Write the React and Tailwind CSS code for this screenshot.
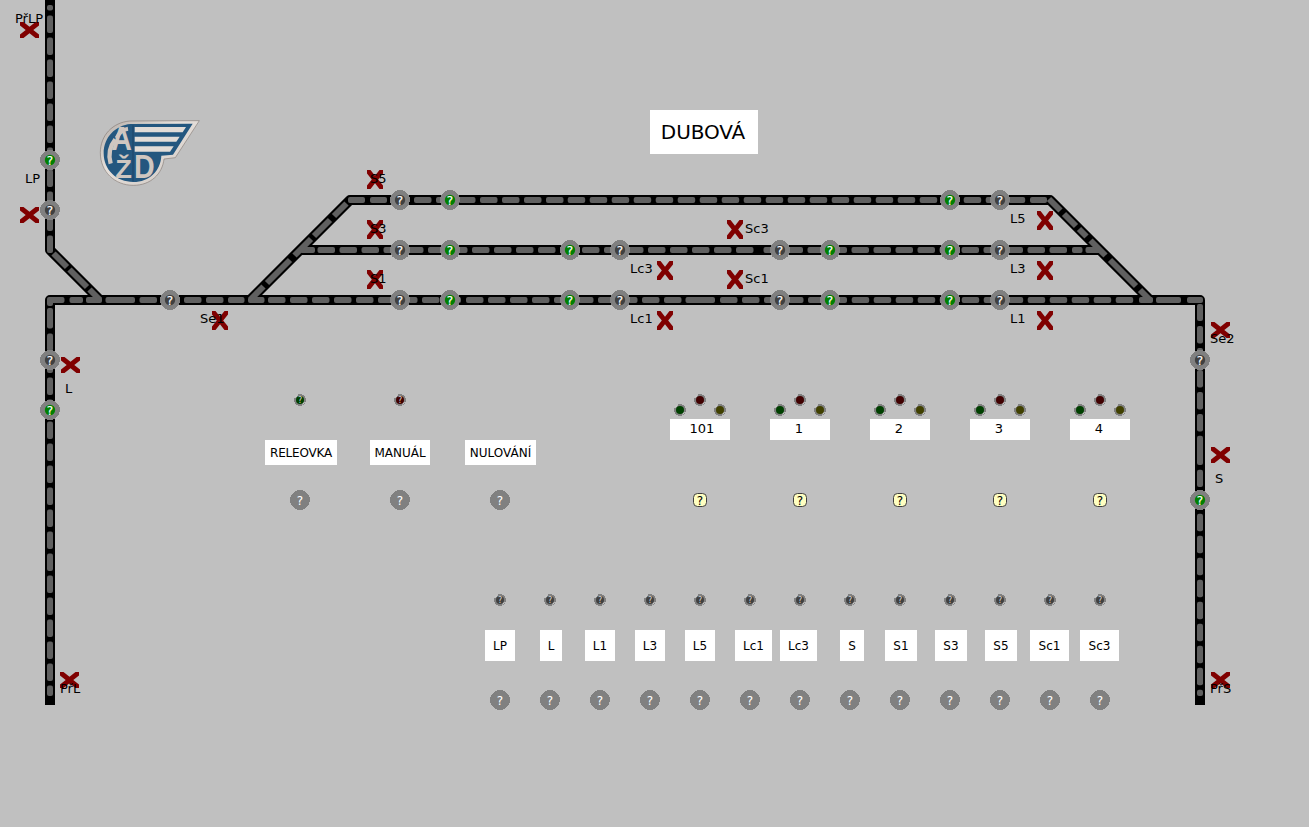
import React from "react";

const range = (from, to, step = 22, len = 17.5) => {
  const out = [];
  for (let s = from; s <= to; s += step) out.push([s, s + len]);
  return out;
};

// Occupancy dashes, given as [start, end] along each track
const HORIZONTAL = [
  { y: 200, dashes: [[348, 365], [370, 387], [392, 409], ...range(414, 458), ...range(480, 546), ...range(567.7, 1008), [1030, 1047]] },
  { y: 250, dashes: [[300, 315], ...range(317.5, 384), ...range(406, 428), ...range(450, 736), [763.5, 780], ...range(785.5, 1051), [1072, 1082.5], [1085.5, 1101]] },
  { y: 300, dashes: [[47, 64.5], [69.5, 83], [86, 102], [105.5, 135], [139.5, 157], [162, 179], ...range(184, 207), [228, 244.5], [248, 264.5], ...range(268, 400), ...range(422, 423), [444, 461], ...range(466, 555), ...range(576, 664), [685.5, 715], ...range(720, 809), [829.7, 847], ...range(851.7, 1116), [1139, 1153], [1156, 1181], [1187, 1203]] },
];
const VERTICAL = [
  { x: 50, dashes: [[5, 10.5], ...range(15.5, 236)] },
  { x: 50, dashes: [[299, 306], [308, 328.5], ...range(333.5, 664), [685.5, 696]] },
  { x: 1200, dashes: [[304, 321], ...range(326, 415), [435.7, 465], [469.7, 487], [491.7, 509], ...range(513.7, 668), [689.7, 696]] },
];
const FALLING = [
  { off: 200, dashes: [[53.5, 67], [69.5, 87], [89.5, 100]] },
  { off: -850, dashes: [[1049, 1060.5], [1064, 1076], [1079, 1086.5], [1090.5, 1105.5], [1110, 1136], [1140, 1151]] },
];
const RISING = [[250.5, 263.5], [267, 290], [294.5, 311], [314, 330], [334, 346.5]];

const RAILS = [
  "M50 0V250L100 300",
  "M50 705V300H1200V705",
  "M250 300L350 200H1050L1150 300",
  "M300 250H1100",
];

const SENSORS = [
  [50, 160, 1], [50, 210, 0], [170, 300, 0], [50, 360, 0], [50, 410, 1],
  [400, 200, 0], [450, 200, 1], [950, 200, 1], [1000, 200, 0],
  [400, 250, 0], [450, 250, 1], [570, 250, 1], [620, 250, 0], [780, 250, 0], [830, 250, 1], [950, 250, 1], [1000, 250, 0],
  [400, 300, 0], [450, 300, 1], [570, 300, 1], [620, 300, 0], [780, 300, 0], [830, 300, 1], [950, 300, 1], [1000, 300, 0],
  [1200, 360, 0], [1200, 500, 1],
];

const TALL = [
  [375, 179.5], [375, 229.5], [375, 279.5], [735, 229.5], [735, 279.5], [665, 270.5],
  [665, 320.5], [1045, 220.5], [1045, 270.5], [1045, 320.5], [220, 320.5],
];
const WIDE = [
  [29.5, 30], [29.5, 215], [70.5, 365], [69.5, 680], [1220.5, 330], [1220.5, 455], [1220.5, 680],
];
const TALL_CROSS = "-8,-9.5 -4.5,-9.5 0,-3.8 4.5,-9.5 8,-9.5 8,-6 3.2,0 8,6 8,9.5 4.5,9.5 0,3.8 -4.5,9.5 -8,9.5 -8,6 -3.2,0 -8,-6";
const WIDE_CROSS = "-9.5,-8 -9.5,-4.5 -3.8,0 -9.5,4.5 -9.5,8 -6,8 0,3.2 6,8 9.5,8 9.5,4.5 3.8,0 9.5,-4.5 9.5,-8 6,-8 0,-3.2 -6,-8";

const LABELS = [
  ["PřLP", 15, 23], ["LP", 25, 183], ["Se1", 200, 323], ["L", 65, 393], ["PřL", 60, 693],
  ["S5", 370, 183], ["S3", 370, 233], ["S1", 370, 283], ["Lc3", 630, 273], ["Lc1", 630, 323],
  ["Sc3", 745, 233], ["Sc1", 745, 283], ["L5", 1010, 223], ["L3", 1010, 273], ["L1", 1010, 323],
  ["Se2", 1210, 343], ["S", 1215, 483], ["PřS", 1210, 693],
];

function Mark({ x, y, fill = "#ffffff", size = 12, weight = 0 }) {
  return (
    <text x={x} y={y + size * 0.375} fontSize={size} textAnchor="middle" fill={fill} stroke={fill} strokeWidth={weight}>?</text>
  );
}

function Sensor({ x, y, on }) {
  return (
    <g>
      <circle cx={x} cy={y} r="10" fill="#808080" shapeRendering="crispEdges" />
      <circle cx={x} cy={y} r="5.2" fill={on ? "#008000" : "#404040"} />
      <Mark x={x} y={y} weight={0.15} />
    </g>
  );
}

function Bulb({ x, y, color, unknown }) {
  return (
    <g>
      <circle cx={x} cy={y} r="6" fill="#808080" shapeRendering="crispEdges" />
      <path d={`M${x - 5} ${y - 2.5}L${x - 2.5} ${y - 5}M${x + 2.5} ${y + 4.5}L${x + 4.5} ${y + 2}`} stroke="#d4d4d4" strokeWidth="1.1" />
      <circle cx={x} cy={y} r="4" fill={color} />
      {unknown && <Mark x={x} y={y} size={8} fill="#d8d8d8" />}
    </g>
  );
}

function Lamp({ color }) {
  return (
    <svg className="block h-3 w-3 self-center" viewBox="0 0 12 12">
      <Bulb x={6} y={6} color={color} unknown />
    </svg>
  );
}

function LampTrio() {
  return (
    <svg className="block h-[22px] w-[52px] self-center" viewBox="0 0 52 22">
      <Bulb x={26} y={6} color="#400000" />
      <Bulb x={6} y={16} color="#004000" />
      <Bulb x={46} y={16} color="#404000" />
    </svg>
  );
}

function PushButton() {
  return (
    <svg className="block h-5 w-5 self-center" viewBox="0 0 20 20">
      <circle cx="10" cy="10" r="10" fill="#808080" shapeRendering="crispEdges" />
      <Mark x={10} y={10} />
    </svg>
  );
}

function RouteButton() {
  return (
    <svg className="block h-3.5 w-3.5 self-center" viewBox="0 0 14 14">
      <rect x="0.5" y="0.5" width="13" height="13" rx="4" fill="#ffffc0" stroke="#404040" />
      <Mark x={7} y={7} fill="#000000" />
    </svg>
  );
}

function Dashes() {
  return (
    <g fill="#606060">
      {HORIZONTAL.flatMap(({ y, dashes }) =>
        dashes.map(([a, b]) => <rect key={`h${y}-${a}`} x={a} y={y - 3} width={b - a} height="6" rx="2" />)
      )}
      {VERTICAL.flatMap(({ x, dashes }) =>
        dashes.map(([a, b]) => <rect key={`v${x}-${a}`} x={x - 3} y={a} width="6" height={b - a} rx="2" />)
      )}
      <g stroke="#606060" strokeWidth="6">
        {FALLING.flatMap(({ off, dashes }) =>
          dashes.map(([a, b]) => <line key={`f${a}`} x1={a} y1={a + off} x2={b} y2={b + off} />)
        )}
        {RISING.map(([a, b]) => <line key={`r${a}`} x1={a} y1={550 - a} x2={b} y2={550 - b} />)}
      </g>
    </g>
  );
}

function Diagram() {
  return (
    <svg className="absolute inset-0 h-[827px] w-[1309px]" viewBox="0 0 1309 827">
      <g fill="none" stroke="#000000" strokeWidth="10" strokeLinejoin="round">
        {RAILS.map((d) => <path key={d} d={d} />)}
      </g>
      <Dashes />
      <g fill="#800000">
        {TALL.map(([x, y]) => <polygon key={`${x}-${y}`} points={TALL_CROSS} transform={`translate(${x} ${y})`} />)}
        {WIDE.map(([x, y]) => <polygon key={`${x}-${y}`} points={WIDE_CROSS} transform={`translate(${x} ${y})`} />)}
      </g>
      <g fontSize="13" fill="#000000">
        {LABELS.map(([t, x, y]) => <text key={t} x={x} y={y}>{t}</text>)}
      </g>
      {SENSORS.map(([x, y, on]) => <Sensor key={`${x}-${y}`} x={x} y={y} on={on} />)}
    </svg>
  );
}

function Logo() {
  return (
    <svg className="h-[85px] w-[120px]" viewBox="0 0 360 255">
      <defs>
        <linearGradient id="metal" x1="0" y1="0" x2="1" y2="1">
          <stop offset="0" stopColor="#b3aca7" />
          <stop offset="0.4" stopColor="#e6e0db" />
          <stop offset="1" stopColor="#cbc4bf" />
        </linearGradient>
      </defs>
      <path d="M328 32L256 143L222 147C217 192 182 226 130 226C74 226 31 185 31 128C31 76 68 37 120 33Z" fill="url(#metal)" stroke="#807570" strokeWidth="1.8" strokeLinejoin="round" />
      <path d="M308 41L249 134L214 137C212 182 178 216 130 216C80 216 41 180 41 130C41 82 76 46 122 42Z" fill="#24577f" />
      <g fill="#e2dcd7">
        <path d="M134 51H288L278 67H134Z" />
        <path d="M134 80H269L259 95H134Z" />
        <path d="M134 109H251L240 125H134Z" />
      </g>
      <path d="M76 88C60 108 54 134 62 161" fill="none" stroke="#cfc6c0" strokeWidth="13" />
      <path d="M80 84C88 66 100 58 114 56" fill="none" stroke="#cfc6c0" strokeWidth="12" />
      <path d="M129 46V214" stroke="#1c4468" strokeWidth="3" />
      <g fill="#cfc6c0" className="font-['Liberation_Sans',sans-serif] font-bold">
        <text x="64" y="121" fontSize="97" textLength="62" lengthAdjust="spacingAndGlyphs">A</text>
        <text x="76" y="204" fontSize="80" textLength="50" lengthAdjust="spacingAndGlyphs">Ž</text>
        <text x="132" y="204" fontSize="97" textLength="62" lengthAdjust="spacingAndGlyphs">D</text>
      </g>
    </svg>
  );
}

function Plate({ className, children }) {
  return (
    <div className={`flex items-center justify-center bg-white leading-none whitespace-nowrap ${className}`}>
      {children}
    </div>
  );
}

const COMMANDS = [
  { name: "RELEOVKA", lamp: "#004000", plate: "ml-[15px] w-[72px] tracking-[-0.2px]" },
  { name: "MANUÁL", lamp: "#400000", plate: "ml-5 w-[60px]" },
  { name: "NULOVÁNÍ", lamp: null, plate: "ml-[15px] w-[71px]" },
];

const ROUTES = [
  { name: "101", plate: "pl-1" },
  { name: "1", plate: "pr-0.5" },
  { name: "2", plate: "pr-0.5" },
  { name: "3", plate: "pr-0.5" },
  { name: "4", plate: "pr-0.5" },
];

const SIGNALS = [
  { name: "LP", plate: "ml-2.5 w-[30px]" },
  { name: "L", plate: "ml-[15px] w-[22px]" },
  { name: "L1", plate: "ml-2.5 w-[30px]" },
  { name: "L3", plate: "ml-2.5 w-[30px]" },
  { name: "L5", plate: "ml-2.5 w-[30px]" },
  { name: "Lc1", plate: "ml-2.5 w-[37px]" },
  { name: "Lc3", plate: "ml-[5px] w-[37px]" },
  { name: "S", plate: "ml-[15px] w-[24px]" },
  { name: "S1", plate: "ml-2.5 w-[32px]" },
  { name: "S3", plate: "ml-2.5 w-[32px]" },
  { name: "S5", plate: "ml-2.5 w-[32px]" },
  { name: "Sc1", plate: "ml-[5px] w-[39px]" },
  { name: "Sc3", plate: "ml-[5px] w-[39px]" },
];

export default function App() {
  return (
    <main className="relative h-[827px] w-[1309px] overflow-hidden bg-[#c0c0c0] font-['DejaVu_Sans',sans-serif] text-black">
      <Diagram />
      <div className="relative flex flex-col pt-[110px]">
        <header className="flex h-[85px] items-start gap-[440px] pl-[90px]">
          <Logo />
          <h1 className="flex h-[44px] w-[108px] items-center justify-center bg-white pr-0.5 text-[20px] leading-none tracking-[-0.1px]">DUBOVÁ</h1>
        </header>

        <div className="mt-[199px] flex gap-[100px] pl-[250px]">
          <section className="flex">
            {COMMANDS.map(({ name, lamp, plate }) => (
              <div key={name} className="flex w-[100px] flex-col items-start">
                <div className="flex h-3 w-full justify-center">{lamp && <Lamp color={lamp} />}</div>
                <Plate className={`mt-[34px] mb-[25px] h-[25px] text-[12px] ${plate}`}>{name}</Plate>
                <PushButton />
              </div>
            ))}
          </section>
          <section className="flex">
            {ROUTES.map(({ name, plate }) => (
              <div key={name} className="flex w-[100px] flex-col items-center">
                <LampTrio />
                <Plate className={`mt-[3px] mb-[53px] h-[21px] w-[60px] pb-0.5 text-[13px] ${plate}`}>{name}</Plate>
                <RouteButton />
              </div>
            ))}
          </section>
        </div>

        <section className="mt-[84px] flex pl-[475px]">
          {SIGNALS.map(({ name, plate }) => (
            <div key={name} className="flex w-[50px] flex-col items-start">
              <Lamp color="#404040" />
              <Plate className={`mt-6 mb-[29px] h-[31px] text-[12px] ${plate}`}>{name}</Plate>
              <PushButton />
            </div>
          ))}
        </section>
      </div>
    </main>
  );
}
